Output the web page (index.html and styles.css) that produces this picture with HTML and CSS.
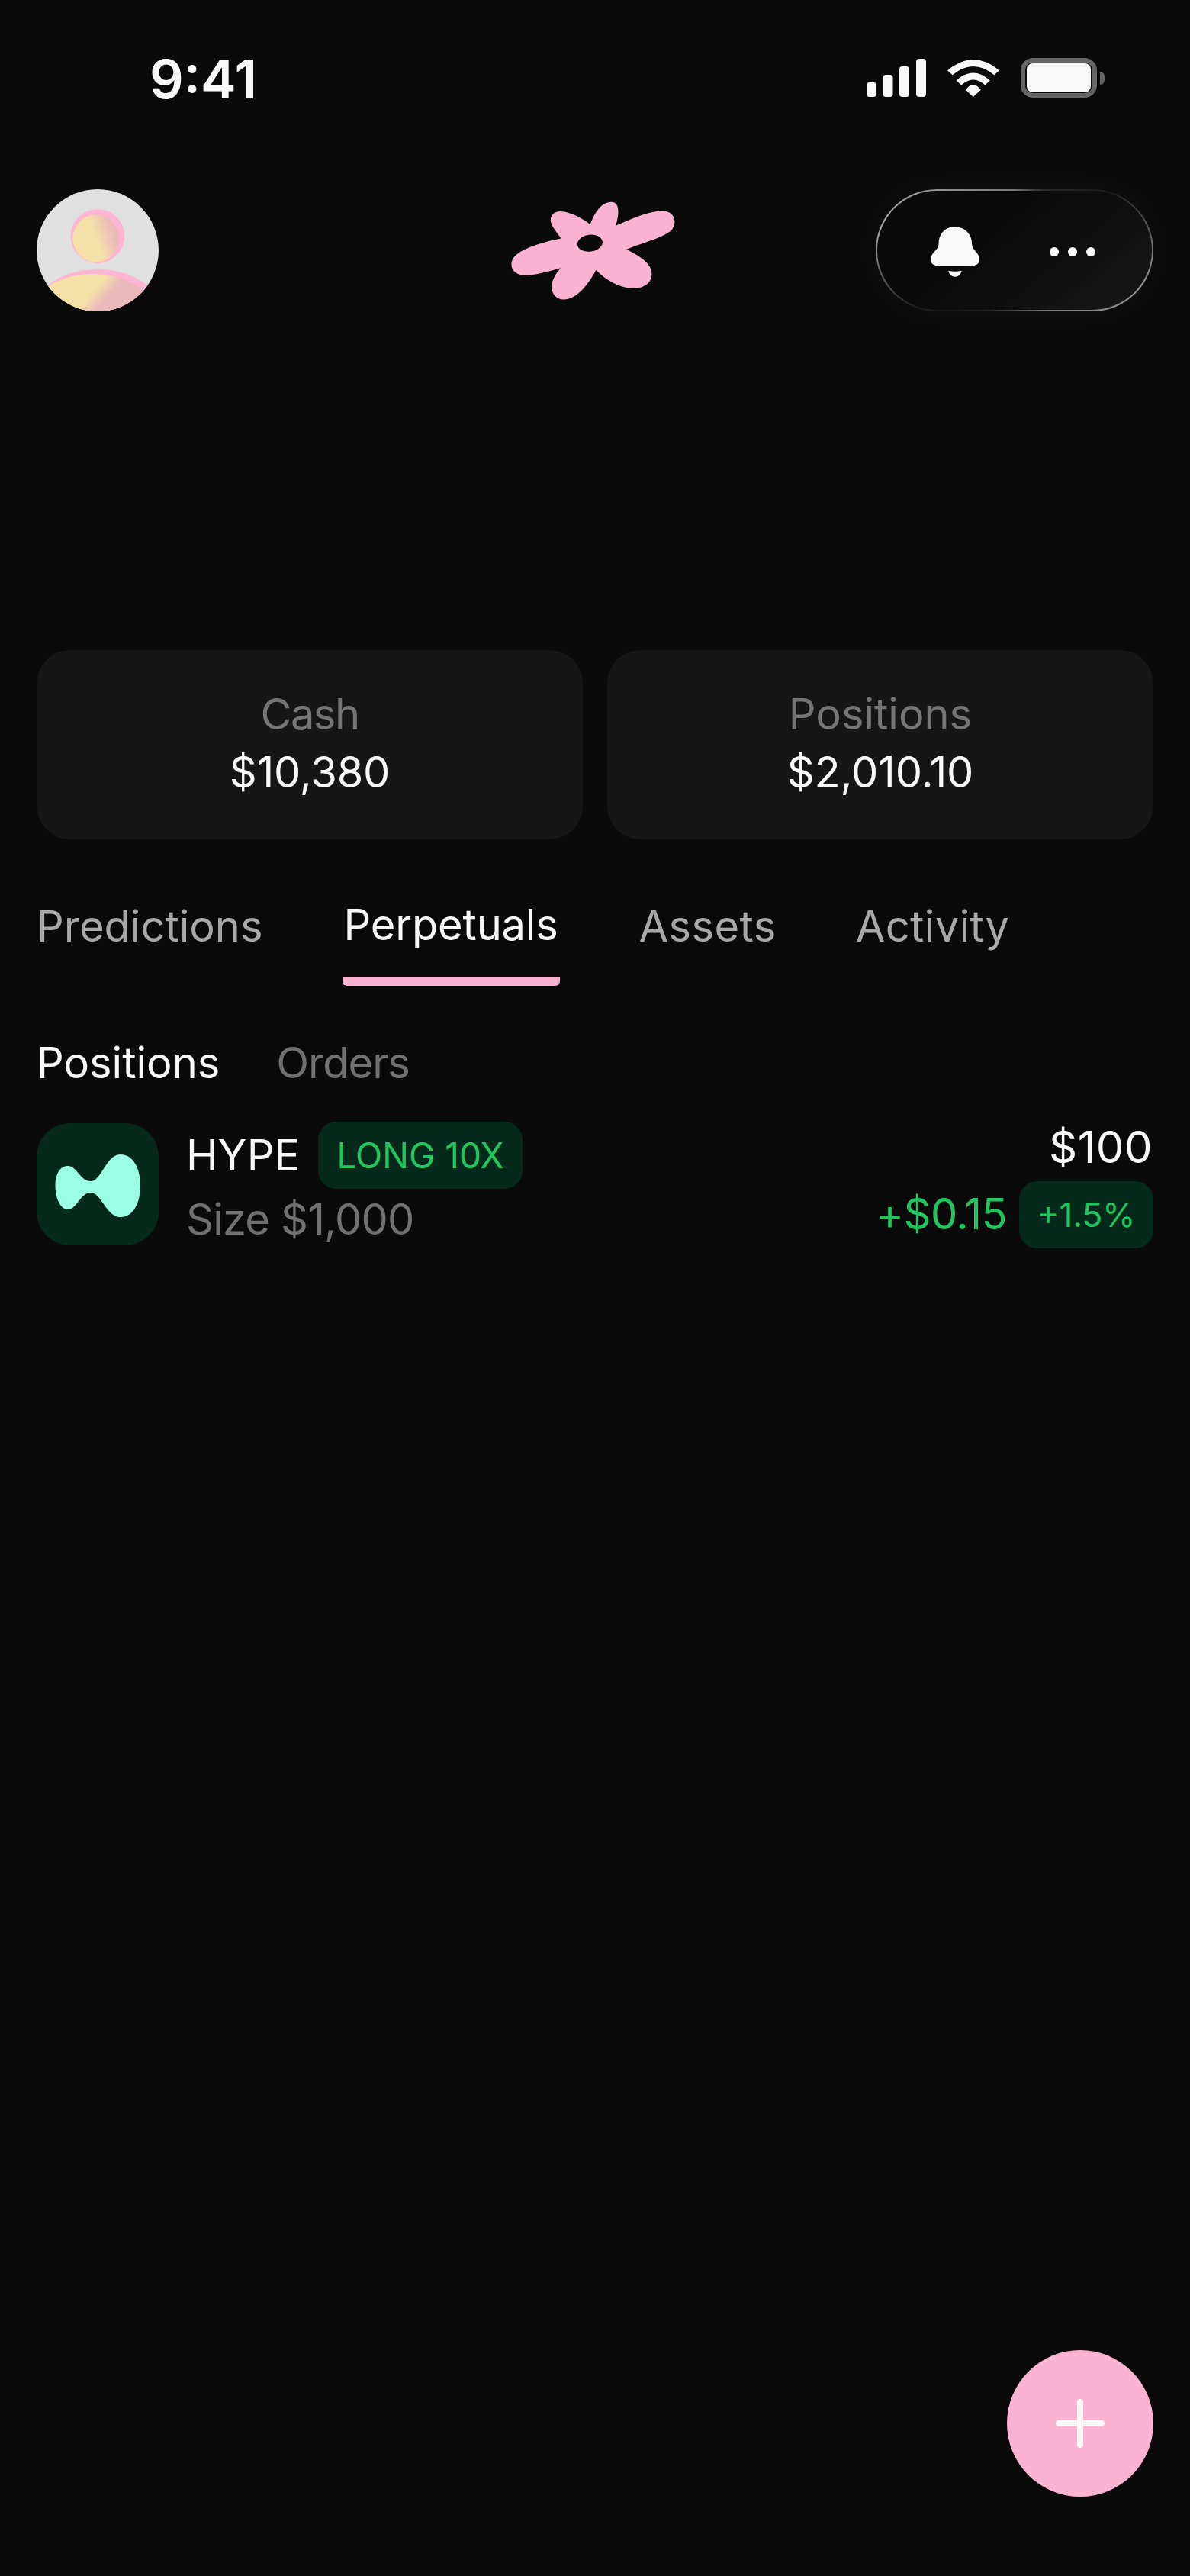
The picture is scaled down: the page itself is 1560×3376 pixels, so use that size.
FILE: index.html
```html
<!DOCTYPE html>
<html lang="en">
<head>
	<meta charset="UTF-8">
	<meta name="viewport" content="width=device-width, initial-scale=1.0">
	<title>Portfolio</title>
	<link rel="stylesheet" href="styles.css">
</head>
<body>
	<div class="page">
		<!-- Status bar -->
		<div class="status_bar">
			<span class="time">9:41</span>
			<div class="status_icons">
				<svg class="signal" viewBox="0 0 78 50" width="78" height="50">
					<rect x="0" y="31" width="13" height="19" rx="4"/>
					<rect x="21.5" y="21" width="13" height="29" rx="4"/>
					<rect x="43" y="10" width="13" height="40" rx="4"/>
					<rect x="65" y="0" width="13" height="50" rx="4"/>
				</svg>
				<svg class="wifi" viewBox="425 112 205 148" width="68" height="49">
					<path d="M425 155 Q527 69 630 155 L610 173 Q527 105 445 173 Z"/>
					<path d="M460 195 Q527 135 593 195 L574 213 Q527 171 480 213 Z"/>
					<path d="M497 232 Q527 192 557 232 L527 260 Z"/>
				</svg>
				<div class="battery">
					<div class="battery_body"><div class="battery_fill"></div></div>
					<div class="battery_cap"></div>
				</div>
			</div>
		</div>

		<!-- Header -->
		<div class="header">
			<svg class="avatar" viewBox="0 0 160 160" width="160" height="160">
				<defs>
					<clipPath id="avatar_clip"><circle cx="80" cy="80" r="80"/></clipPath>
					<linearGradient id="head_fill" gradientUnits="userSpaceOnUse" x1="66" y1="72" x2="108" y2="56">
						<stop offset="0.3" stop-color="#f5e0a8"/>
						<stop offset="0.85" stop-color="#ebb9b9"/>
					</linearGradient>
					<linearGradient id="body_fill" gradientUnits="userSpaceOnUse" x1="72" y1="122" x2="108" y2="152">
						<stop offset="0.2" stop-color="#f5e0a8"/>
						<stop offset="0.6" stop-color="#ebb9b9"/>
					</linearGradient>
				</defs>
				<g clip-path="url(#avatar_clip)">
					<rect width="160" height="160" fill="#e0e0e0"/>
					<circle cx="80" cy="61.5" r="35.5" fill="#fdb5d4"/>
					<ellipse cx="78" cy="64.5" rx="30.5" ry="31" fill="url(#head_fill)"/>
					<ellipse cx="80" cy="175" rx="92" ry="70" fill="#fdb5d4"/>
					<ellipse cx="74" cy="181" rx="92" ry="70" fill="url(#body_fill)"/>
				</g>
			</svg>
			<svg class="logo" viewBox="150 130 650 387" width="216" height="129">
				<path fill="#fbb3d1" d="M462 220 C480 175 505 132 545 132 C575 132 580 165 563 225 C630 195 700 165 750 167 C790 168 808 205 785 240 C760 268 680 290 605 318 C660 345 705 375 705 415 C705 455 665 475 625 472 C575 468 525 440 485 400 C450 465 405 516 358 516 C320 516 300 480 315 440 C322 420 335 405 345 392 C290 408 235 422 205 421 C165 420 145 395 153 365 C165 320 270 290 347 275 C325 245 300 215 307 195 C312 172 335 165 360 170 C400 178 435 200 462 220 Z"/>
				<ellipse cx="461" cy="294" rx="50" ry="33" transform="rotate(-8 461 294)" fill="#0a0a0a"/>
			</svg>
			<div class="action_pill">
				<svg class="bell" viewBox="360 765 192 197" width="64" height="66">
					<path d="M455 765 C415 765 392 795 392 830 C392 860 360 865 360 893 C360 910 372 918 390 920 L520 920 C540 918 552 910 552 893 C552 865 522 860 522 830 C522 795 495 765 455 765 Z"/>
					<path d="M430 938 Q455 944 482 938 C480 952 468 962 456 962 C444 962 432 952 430 938 Z"/>
				</svg>
				<div class="dots"><span></span><span></span><span></span></div>
			</div>
		</div>

		<!-- Balance cards -->
		<div class="cards">
			<div class="card">
				<div class="card_label card_label_tight">Cash</div>
				<div class="card_value">$10,380</div>
			</div>
			<div class="card">
				<div class="card_label">Positions</div>
				<div class="card_value">$2,010.10</div>
			</div>
		</div>

		<!-- Tabs -->
		<div class="tabs">
			<div class="tab">Predictions</div>
			<div class="tab tab_active">Perpetuals</div>
			<div class="tab tab_wide">Assets</div>
			<div class="tab tab_wide">Activity</div>
		</div>

		<div class="subtabs">
			<div class="subtab subtab_active">Positions</div>
			<div class="subtab">Orders</div>
		</div>

		<!-- Position row -->
		<div class="position">
			<div class="coin">
				<svg viewBox="0 0 160 160" width="160" height="160">
					<path fill="#9affe3" d="M24.5 82 C24.5 66 31 56 41 56 C53 56 57 76 71 76 C85 76 91 41 110 41 C127 41 136 60 136 82 C136 104 127 123 110 123 C91 123 85 91 71 91 C57 91 53 113 41 113 C31 113 24.5 98 24.5 82 Z"/>
				</svg>
			</div>
			<div class="position_info">
				<div class="position_title">
					<span class="ticker">HYPE</span>
					<span class="badge badge_long">LONG 10X</span>
				</div>
				<div class="position_size">Size $1,000</div>
			</div>
			<div class="position_values">
				<div class="position_amount">$100</div>
				<div class="position_pnl">
					<span class="pnl_value">+$0.15</span>
					<span class="badge badge_pct">+1.5%</span>
				</div>
			</div>
		</div>

		<div class="fab">
			<svg viewBox="0 0 64 64" width="64" height="64">
				<path d="M32 4 V60 M4 32 H60" stroke="#f8f8f8" stroke-width="8" stroke-linecap="round" fill="none"/>
			</svg>
		</div>
	</div>
</body>
</html>
```
FILE: styles.css
```css
* {
	box-sizing: border-box;
}
body {
	margin: 0;
	background: #0a0a0a;
	color: #f8f8f8;
	font-family: "Inter", "Liberation Sans", sans-serif;
	font-size: 56px;
	line-height: 68px;
}
.page {
	position: relative;
	width: 1560px;
	height: 3376px;
	padding: 56px 48px 0;
	overflow: hidden;
}

/* status bar */
.status_bar {
	display: flex;
	justify-content: space-between;
	align-items: center;
	height: 92px;
	padding: 0 64px 0 148px;
}
.time {
	padding-top: 3px;
	font-size: 70px;
	font-weight: 600;
	line-height: 92px;
}
.status_icons {
	display: flex;
	align-items: center;
	gap: 28px;
}
.signal, .wifi {
	display: block;
	fill: #f8f8f8;
}
.battery {
	display: flex;
	align-items: center;
	gap: 4px;
}
.battery_body {
	width: 100px;
	height: 52px;
	padding: 1px 2px;
	border: 6px solid #666;
	border-radius: 16px;
}
.battery_fill {
	height: 100%;
	background: #f8f8f8;
	border-radius: 8px;
}
.battery_cap {
	width: 6px;
	height: 17px;
	background: #666;
	border-radius: 0 8px 8px 0;
}

/* header */
.header {
	display: grid;
	grid-template-columns: 1fr auto 1fr;
	align-items: center;
	margin-top: 100px;
}
.avatar {
	display: block;
}
.logo {
	display: block;
	margin-right: 4px;
}
.action_pill {
	justify-self: end;
	display: flex;
	align-items: center;
	gap: 92px;
	width: 364px;
	height: 160px;
	padding: 4px 0 0 70px;
	border: 2px solid transparent;
	border-radius: 80px;
	background:
		linear-gradient(140deg, #0a0a0a 40%, #151515 90%) padding-box,
		conic-gradient(from 0deg, #777 0deg, #2a2a2a 25deg, #1c1c1c 60deg, #999 105deg, #777 150deg, #555 170deg, #222 205deg, #1a1a1a 240deg, #aaa 280deg, #888 320deg, #777 360deg) border-box;
	box-shadow: 0 0 48px rgba(255, 255, 255, 0.035);
}
.bell {
	display: block;
	fill: #f8f8f8;
}
.dots {
	display: flex;
	gap: 12px;
}
.dots span {
	width: 12px;
	height: 12px;
	background: #f8f8f8;
	border-radius: 50%;
}

/* cards */
.cards {
	display: grid;
	grid-template-columns: 1fr 1fr;
	gap: 32px;
	margin-top: 444px;
}
.card {
	height: 248px;
	padding: 46px 0 50px;
	text-align: center;
	line-height: 76px;
	background: #161616;
	border-radius: 44px;
}
.card_label {
	color: #757575;
}
.card_label_tight {
	letter-spacing: -1.5px;
}
.card_value {
	letter-spacing: -0.2px;
}

/* tabs */
.tabs {
	display: flex;
	align-items: flex-start;
	gap: 104px;
	margin-top: 78px;
}
.tab {
	padding-top: 2px;
	color: #a8a8a8;
}
.tab_active {
	padding: 0 2px 34px;
	color: #f8f8f8;
	letter-spacing: -0.2px;
	border-bottom: 12px solid #fbb3d1;
	border-radius: 0 0 6px 6px;
}
.tab_wide {
	letter-spacing: 0.4px;
}
.subtabs {
	display: flex;
	gap: 74px;
	margin-top: 67px;
}
.subtab {
	color: #717171;
	letter-spacing: -1px;
}
.subtab_active {
	color: #f8f8f8;
	letter-spacing: 0;
}

/* position row */
.position {
	display: flex;
	align-items: flex-start;
	margin-top: 45px;
}
.coin {
	width: 160px;
	height: 160px;
	margin-right: 36px;
	background: #05291a;
	border-radius: 44px;
}
.coin svg {
	display: block;
}
.position_info {
	flex: 1;
	margin-top: -2px;
}
.position_title {
	display: flex;
	align-items: center;
	gap: 24px;
	height: 88px;
}
.badge {
	display: flex;
	align-items: center;
	justify-content: center;
	height: 88px;
	color: #22c55e;
	background: #05291a;
	border-radius: 24px;
}
.badge_long {
	width: 268px;
	font-size: 46px;
}
.badge_pct {
	width: 176px;
	font-size: 44px;
}
.position_size {
	margin-top: 6px;
	color: #717171;
	letter-spacing: -0.8px;
}
.position_values {
	margin-top: -3px;
	text-align: right;
}
.position_amount {
	margin-right: 1px;
	font-size: 58px;
	letter-spacing: 0.5px;
}
.position_pnl {
	display: flex;
	align-items: center;
	gap: 16px;
	margin-top: 11px;
}
.pnl_value {
	margin-bottom: 2px;
	color: #22c55e;
	letter-spacing: -0.5px;
}

/* floating button */
.fab {
	position: absolute;
	top: 3080px;
	right: 48px;
	display: flex;
	align-items: center;
	justify-content: center;
	width: 192px;
	height: 192px;
	background: #fbb3d1;
	border-radius: 50%;
}
```
